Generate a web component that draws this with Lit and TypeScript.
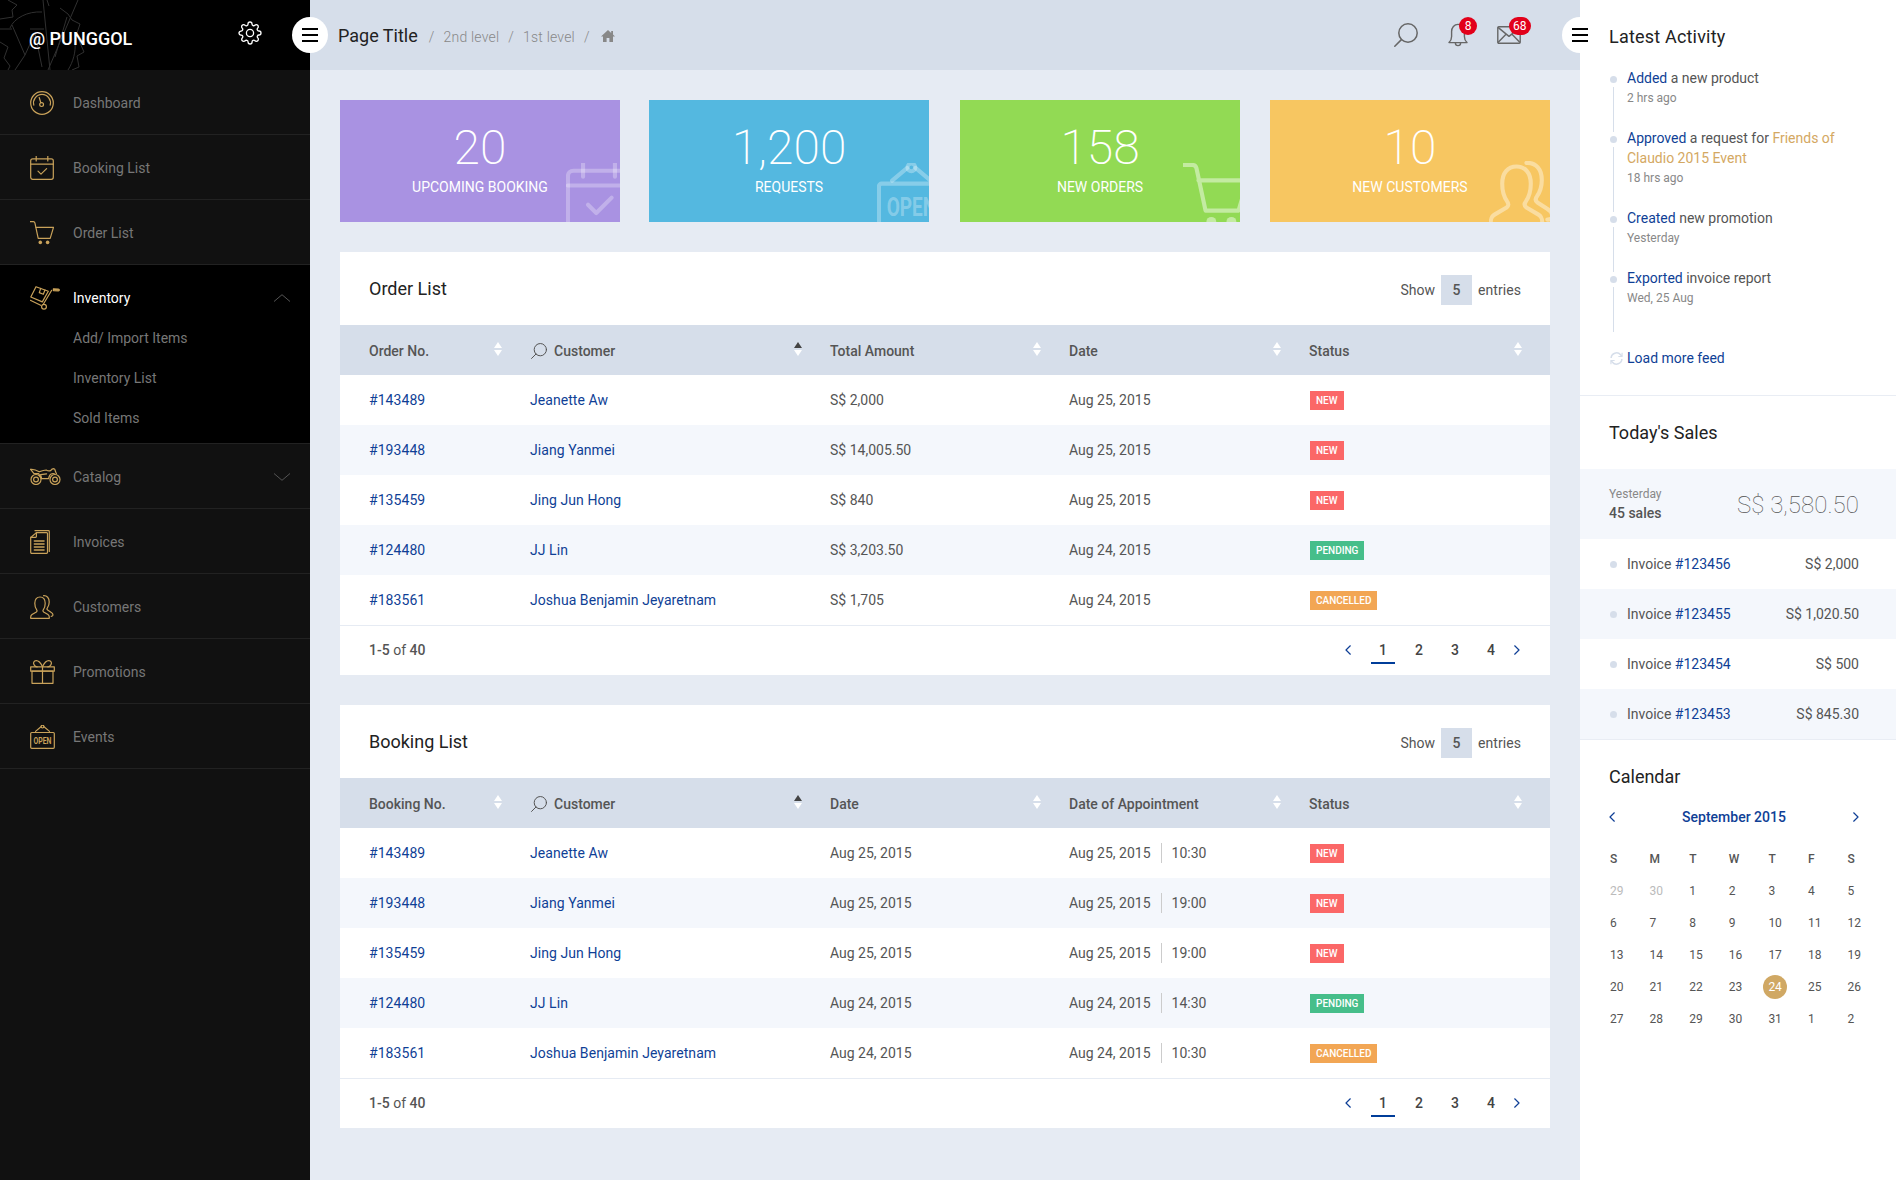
import { LitElement, html, css, svg, TemplateResult } from "lit";
import { customElement } from "lit/decorators.js";

const ICONS: Record<string, { w: number; h: number; body: unknown }> = {
  dashboard: { w: 24, h: 24, body: svg`<circle cx="12" cy="12" r="11.3"/><path d="M3.8 14.2a8.5 8.5 0 1 1 16.4 0"/><path d="M9.2 6.5l1.6 5.2"/><circle cx="11.6" cy="13.6" r="1.9"/>` },
  calendar: { w: 24, h: 24, body: svg`<rect x=".7" y="2.8" width="22.6" height="20.5" rx="2"/><path d="M.7 8.2h22.6M6.2 0v5M17.8 0v5"/><path d="M8 15.2l3 3 5.6-5.6"/>` },
  cart: { w: 24, h: 24, body: svg`<path d="M0 .7h3.4c.8 0 1.3.4 1.5 1.2l3.3 15.4h12l3.3-11H5.6"/><circle cx="10.3" cy="21.4" r="1.8" fill="currentColor" stroke="none"/><circle cx="17.6" cy="21.4" r="1.8" fill="currentColor" stroke="none"/>` },
  trolley: { w: 30, h: 24, body: svg`<path d="M6 .7L.8 11l11.5 4.9 6-10.6z"/><path d="M10.7 2.4L9.3 6.6l4 1.7L15 4.1"/><path d="M.3 14.3l10.4 5"/><path d="M13.3 18.3L21.7 4.3"/><path d="M23.4 2.8l5 .4c1.2.1 1.2 1.6 0 1.6l-5-.2z" fill="currentColor"/><circle cx="14" cy="20.8" r="2.4"/>` },
  moto: { w: 31, h: 17, body: svg`<circle cx="6" cy="11.5" r="5"/><circle cx="6" cy="11.5" r="2.4"/><circle cx="25" cy="11.5" r="5"/><circle cx="25" cy="11.5" r="2.4"/><path d="M.6 1.4c3.2-.4 6 .8 8.6 2.4 2.6-1 5-1.8 7-1.8 1.6 1 2.8 1.4 4.4.6.8-1.2 1.8-2 3.2-2 1 .2 1.4 1.2 1.4 2.2l1.2 3"/><path d="M.6 1.4L4 5.6h4.6l3 5h7c.6-3 1.6-4.6 3-4.8 1-.2 2-.2 2.8 0"/><path d="M11.6 10.6l-1-4 6-.8"/>` },
  invoice: { w: 20, h: 24, body: svg`<path d="M5 .7h13.5c.5 0 .8.3.8.8v20"/><path d="M1.6 6.8L6.4 2.6h10.2c.5 0 .9.4.9.9v18.8c0 .5-.4 1-.9 1H1.6c-.5 0-.9-.5-.9-1V7.6c0-.3.3-.8.9-.8z"/><path d="M1 7.4h4.6c.5 0 .8-.3.8-.8V2.6"/><path d="M4.4 11h9.6M4.4 14h9.6M4.4 17h9.6M4.4 20h9.6" stroke-width="1.6"/>` },
  customers: { w: 25, h: 24, body: svg`<path d="M.7 23.3c-.2-2 0-3 1.3-3.8l4.4-2.6c.8-.6.8-1.4.2-2.2-1-1.4-1.8-3.8-1.8-6.4C4.8 4.4 6.8 2 10 2s5.2 2.4 5.2 6.3c0 2.6-.8 5-1.8 6.4-.6.8-.6 1.6.2 2.2l4.4 2.6c1.3.8 1.5 1.8 1.3 3.8z"/><path d="M13.6.7c3.4-.2 5.6 2.2 5.6 6.2 0 2.6-.8 4.6-1.8 6-.7.9-.5 1.6.2 2.2l3.4 2.2c1.3.8 2 1.6 2 2.8 0 .9-.7 1.2-1.8 1.2"/>` },
  gift: { w: 25, h: 24, body: svg`<rect x=".7" y="6.8" width="23.6" height="4.4"/><rect x="2" y="11.2" width="21" height="12.1"/><path d="M12.5 6.8v16.5"/><path d="M12.5 6.8C10.6 2.6 8.4.7 6.2.7 3.8.7 3 3 4 4.6c.6 1.1 1.8 2.2 3.2 2.2"/><path d="M12.5 6.8C14.4 2.6 16.6.7 18.8.7c2.4 0 3.2 2.3 2.2 3.9-.6 1.1-1.8 2.2-3.2 2.2"/>` },
  open: { w: 25, h: 24, body: svg`<path d="M5.5 6.4L11 1.8M14 1.8l5.5 4.6"/><circle cx="12.5" cy="1.6" r="1.4"/><rect x=".7" y="7.5" width="23.6" height="15.8" rx="1"/><text x="3.5" y="19.2" textLength="18" lengthAdjust="spacingAndGlyphs" class="open-text">OPEN</text>` },
};

function icon(name: string, cls: string, scale = 1): TemplateResult {
  const i = ICONS[name];
  const style = `width:${i.w * scale}px;height:${i.h * scale}px`;
  return html`<svg class=${cls} style=${style} viewBox="0 0 ${i.w} ${i.h}" fill="none" stroke="currentColor" stroke-width="1.2" stroke-linecap="round" stroke-linejoin="round">${i.body}</svg>`;
}

const searchIcon = (cls: string) => html`<svg class=${cls} viewBox="0 0 24 24" fill="none" stroke="currentColor" stroke-width="1.5" stroke-linecap="round"><circle cx="14" cy="10" r="9.2"/><path d="M7.4 16.6L.8 23.2"/></svg>`;

const chevron = (dir: "left" | "right") => html`<svg class="pg-chev" viewBox="0 0 6 10" fill="none" stroke="currentColor" stroke-width="1.2" stroke-linecap="round" stroke-linejoin="round"><path d=${dir === "left" ? "M5.3 .8L1 5l4.3 4.2" : "M.7 .8L5 5 .7 9.2"}/></svg>`;

const gearPath = "M19.4 15a1.65 1.65 0 0 0 .33 1.82l.06.06a2 2 0 0 1 0 2.83 2 2 0 0 1-2.83 0l-.06-.06a1.65 1.65 0 0 0-1.82-.33 1.65 1.65 0 0 0-1 1.51V21a2 2 0 0 1-2 2 2 2 0 0 1-2-2v-.09A1.65 1.65 0 0 0 9 19.4a1.65 1.65 0 0 0-1.82.33l-.06.06a2 2 0 0 1-2.83 0 2 2 0 0 1 0-2.83l.06-.06a1.65 1.65 0 0 0 .33-1.82 1.65 1.65 0 0 0-1.51-1H3a2 2 0 0 1-2-2 2 2 0 0 1 2-2h.09A1.65 1.65 0 0 0 4.6 9a1.65 1.65 0 0 0-.33-1.82l-.06-.06a2 2 0 0 1 0-2.83 2 2 0 0 1 2.83 0l.06.06a1.65 1.65 0 0 0 1.82.33H9a1.65 1.65 0 0 0 1-1.51V3a2 2 0 0 1 2-2 2 2 0 0 1 2 2v.09a1.65 1.65 0 0 0 1 1.51 1.65 1.65 0 0 0 1.82-.33l.06-.06a2 2 0 0 1 2.83 0 2 2 0 0 1 0 2.83l-.06.06a1.65 1.65 0 0 0-.33 1.82V9a1.65 1.65 0 0 0 1.51 1H21a2 2 0 0 1 2 2 2 2 0 0 1-2 2h-.09a1.65 1.65 0 0 0-1.51 1z";

const NAV_TOP = [
  ["dashboard", "Dashboard"],
  ["calendar", "Booking List"],
  ["cart", "Order List"],
];
const NAV_BOTTOM = [
  ["invoice", "Invoices"],
  ["customers", "Customers"],
  ["gift", "Promotions"],
  ["open", "Events"],
];

const STATS = [
  { n: "20", l: "Upcoming Booking", c: "purple", i: "calendar" },
  { n: "1,200", l: "Requests", c: "blue", i: "open" },
  { n: "158", l: "New Orders", c: "green", i: "cart" },
  { n: "10", l: "New Customers", c: "amber", i: "customers" },
];

const PEOPLE = [
  ["#143489", "Jeanette Aw"],
  ["#193448", "Jiang Yanmei"],
  ["#135459", "Jing Jun Hong"],
  ["#124480", "JJ Lin"],
  ["#183561", "Joshua Benjamin Jeyaretnam"],
];
const ORDERS = [
  ["S$ 2,000", "Aug 25, 2015", "new"],
  ["S$ 14,005.50", "Aug 25, 2015", "new"],
  ["S$ 840", "Aug 25, 2015", "new"],
  ["S$ 3,203.50", "Aug 24, 2015", "pending"],
  ["S$ 1,705", "Aug 24, 2015", "cancelled"],
];
const BOOKINGS = [
  ["Aug 25, 2015", "Aug 25, 2015", "10:30", "new"],
  ["Aug 25, 2015", "Aug 25, 2015", "19:00", "new"],
  ["Aug 25, 2015", "Aug 25, 2015", "19:00", "new"],
  ["Aug 24, 2015", "Aug 24, 2015", "14:30", "pending"],
  ["Aug 24, 2015", "Aug 24, 2015", "10:30", "cancelled"],
];
const INVOICES = [
  ["#123456", "S$ 2,000"],
  ["#123455", "S$ 1,020.50"],
  ["#123454", "S$ 500"],
  ["#123453", "S$ 845.30"],
];
const CAL = [
  ["29", "30", "1", "2", "3", "4", "5"],
  ["6", "7", "8", "9", "10", "11", "12"],
  ["13", "14", "15", "16", "17", "18", "19"],
  ["20", "21", "22", "23", "24", "25", "26"],
  ["27", "28", "29", "30", "31", "1", "2"],
];

@customElement("app-root")
export class AppRoot extends LitElement {
  static styles = css`
    :host {
      display: grid;
      grid-template-columns: 310px 1270px 316px;
      position: relative;
      min-height: 1180px;
      font-family: Roboto, "Liberation Sans", sans-serif;
      font-size: 14px;
      color: #555;
      background: #e6ebf3;
      overflow: hidden;
    }
    * { box-sizing: border-box; }
    a { color: #0f3f96; text-decoration: none; }

    .side { background: #111; min-height: 1180px; }
    .brand {
      height: 70px;
      background: #000;
      position: relative;
      display: flex;
      align-items: center;
      padding: 6px 48px 0 29px;
      justify-content: space-between;
      overflow: hidden;
    }
    .brand-art { position: absolute; left: 0; top: 0; width: 110px; height: 70px; stroke: #303030; fill: none; stroke-width: 1; }
    .brand-name { position: relative; color: #fff; font-size: 18px; font-weight: 500; }
    .gear { position: relative; width: 24px; height: 24px; color: #fff; margin-top: -10px; }
    .row {
      height: 65px;
      display: flex;
      align-items: center;
      padding: 1px 20px 0 30px;
      border-bottom: 1px solid #222;
      color: #777;
    }
    .row .slot { width: 43px; display: flex; align-items: center; flex: none; }
    .nav-i { color: #c9a25a; display: block; }
    .open-text { font-family: Roboto, sans-serif; font-size: 9.5px; font-weight: 700; fill: currentColor; stroke: none; }
    .row .caret { margin-left: auto; width: 16px; height: 8px; color: #555; }
    .group { background: #000; border-bottom: 1px solid #222; padding-bottom: 5px; }
    .group .row { height: 53px; padding-top: 13px; border: 0; color: #fff; }
    .sub { height: 40px; display: flex; align-items: center; padding-left: 73px; color: #777; }

    .main { min-width: 0; }
    .top {
      height: 70px;
      background: #d6deea;
      display: flex;
      align-items: center;
      padding: 0 59px 0 29px;
      color: #888;
    }
    .page-title { font-size: 18px; color: #222; margin-right: 11px; margin-left: -1px; }
    .crumb { display: flex; align-items: center; gap: 9px; font-weight: 300; margin-top: 4px; letter-spacing: 0.2px; }
    .home { width: 14px; height: 14px; fill: #888; margin-left: 2px; margin-top: -2px; }
    .top-icons { margin-left: auto; display: flex; align-items: center; color: #666; }
    .ti { position: relative; display: block; }
    .ti svg { display: block; }
    .search { width: 24px; height: 24px; }
    .bell { width: 20px; height: 24px; margin-left: 30px; }
    .mail { width: 24px; height: 18px; margin-left: 29px; }
    .badge {
      position: absolute;
      background: #e2001a;
      color: #fff;
      font-size: 12px;
      height: 18px;
      min-width: 18px;
      line-height: 18px;
      text-align: center;
      border-radius: 9px;
      padding: 0 3px;
    }
    .bell .badge { left: 11px; top: -6px; }
    .mail .badge { left: 12px; top: -9px; padding: 0 4px; }

    .content { padding: 30px 30px 52px; display: flex; flex-direction: column; gap: 30px; }
    .stats { display: grid; grid-template-columns: 309px 311px 310px 280px; }
    .stat {
      width: 280px;
      height: 122px;
      position: relative;
      overflow: hidden;
      color: #fff;
      text-align: center;
      padding-top: 20px;
    }
    .stat .n { font-size: 48px; font-weight: 200; line-height: 56px; }
    .stat .l { font-size: 14px; text-transform: uppercase; line-height: 20px; margin-top: 1px; }
    .stat .bg { position: absolute; top: 63px; left: 226px; color: rgba(255, 255, 255, 0.28); stroke-width: 1.5; }
    .stat.blue .bg { left: 228px; color: rgba(255, 255, 255, 0.3); }
    .stat.green .bg { left: 223px; color: rgba(255, 255, 255, 0.45); }
    .stat.amber .bg { left: 219px; top: 61px; color: rgba(255, 255, 255, 0.4); }
    .purple { background: #a992e2; }
    .blue { background: #54b8e0; }
    .green { background: #92da54; }
    .amber { background: #f7c661; }

    .card { background: #fff; }
    .card-head {
      height: 73px;
      display: flex;
      align-items: center;
      justify-content: space-between;
      padding: 0 29px;
    }
    .card-title { font-size: 18px; color: #222; }
    .show { display: flex; align-items: center; margin-top: 3px; letter-spacing: 0.05px; }
    .show b { width: 31px; height: 30px; background: #d6deea; margin: 0 6px; display: flex; align-items: center; justify-content: center; font-weight: 500; }
    .grid-row {
      display: grid;
      grid-template-columns: 190px 300px 239px 240px 1fr;
      height: 50px;
      align-items: center;
    }
    .grid-row > * { padding-left: 0; min-width: 0; }
    .grid-row > :first-child { padding-left: 29px; }
    .thead { background: #d6deea; font-weight: 500; }
    .th { display: flex; align-items: center; position: relative; height: 100%; padding-top: 1px; }
    .th .srch { width: 16px; height: 16px; margin: 0 7px 0 1px; color: #555; }
    .sort { position: absolute; right: 28px; top: 17px; display: flex; flex-direction: column; gap: 2px; }
    .sort i { display: block; width: 0; height: 0; border-left: 4.5px solid transparent; border-right: 4.5px solid transparent; }
    .sort i:first-child { border-bottom: 6px solid #fff; }
    .sort i:last-child { border-top: 6px solid #fff; }
    .sort.on i:first-child { border-bottom-color: #444; }
    .tbody .grid-row:nth-child(even) { background: #f4f7fc; }
    .tbody a { letter-spacing: 0.06px; }
    .tag { display: inline-block; height: 19px; line-height: 19px; padding: 0 6px; color: #fff; font-size: 10px; font-weight: 500; margin-left: 1px; vertical-align: middle; }
    .tag.new { background: #fb6767; }
    .tag.pending { background: #46be8a; }
    .tag.cancelled { background: #f2a654; }
    .appt { display: flex; align-items: center; }
    .appt span:first-child { border-right: 1px solid #ccc; padding-right: 10px; margin-right: 10px; line-height: 20px; }
    .card-foot {
      height: 50px;
      border-top: 1px solid #e6ebf3;
      display: flex;
      align-items: center;
      justify-content: space-between;
      padding: 0 29px;
    }
    .foot-info { margin-top: -2px; }
    .foot-info b { font-weight: 500; }
    .pager { display: flex; align-items: center; font-weight: 500; color: #444; margin-right: 1px; }
    .pager a { color: #0f3f96; display: flex; }
    .pg-chev { width: 6px; height: 10px; display: block; }
    .pager span { width: 24px; margin-left: 12px; height: 26px; line-height: 24px; text-align: center; display: block; border-bottom: 2px solid transparent; }
    .pager span.on { border-bottom-color: #003d99; }
    .pager a:first-child { margin-right: 8px; margin-top: -2px; }
    .pager a:last-child { margin-left: 11px; margin-top: -2px; }

    .right { background: #fff; }
    .r-title { font-size: 18px; color: #222; line-height: 24px; }
    .activity { padding: 25px 0 0 29px; height: 396px; border-bottom: 1px solid #e9edf4; }
    .activity .r-title { letter-spacing: 0.2px; }
    .feed { margin-top: 19px; }
    .item { position: relative; padding: 0 20px 20px 18px; line-height: 20px; width: 280px; color: #555; }
    .item::before { content: ""; position: absolute; left: 1px; top: 8px; width: 7px; height: 7px; border-radius: 50%; background: #d6deea; }
    .item::after { content: ""; position: absolute; left: 4px; top: 19px; bottom: -4px; width: 1px; background: #d6deea; }
    .item em { font-style: normal; color: #d4a862; }
    .item small { display: block; font-size: 12px; color: #888; }
    .more { display: flex; align-items: center; margin-top: 20px; line-height: 20px; }
    .more svg { width: 13px; height: 13px; margin-right: 4px; margin-left: 1px; color: #d6deea; }
    .sales-head { padding: 25px 0 0 29px; height: 73px; }
    .summary { height: 70px; background: #f4f7fc; display: flex; align-items: center; justify-content: space-between; padding: 0 37px 0 29px; }
    .summary small { display: block; font-size: 12px; color: #888; line-height: 18px; }
    .summary b { display: block; font-weight: 500; line-height: 20px; }
    .summary .big { font-size: 24px; font-weight: 100; color: #555; padding-top: 2px; letter-spacing: 0.05px; }
    .inv { height: 50px; display: flex; align-items: center; justify-content: space-between; padding: 0 37px 0 29px; position: relative; }
    .inv:nth-child(even) { background: #f4f7fc; }
    .inv .dot { width: 7px; height: 7px; border-radius: 50%; background: #d6deea; margin: 1px 10px 0 1px; display: inline-block; }
    .inv .t { display: flex; align-items: center; white-space: pre; }
    .invs { border-bottom: 1px solid #e9edf4; }
    .calendar { padding: 25px 0 0 29px; }
    .cal-head { display: flex; align-items: center; justify-content: space-between; width: 250px; margin-top: 18px; height: 20px; color: #0f3f96; font-weight: 500; }
    .cal-head a { display: flex; }
    .cal-grid { display: grid; grid-template-columns: repeat(7, 39.6px); grid-auto-rows: 32px; margin-top: 16px; font-size: 12px; align-items: center; margin-left: 1px; }
    .cal-grid .wd { font-weight: 500; }
    .cal-grid .mut { color: #bbb; }
    .cal-grid .today { position: relative; color: #fff; z-index: 0; }
    .cal-grid .today::before { content: ""; position: absolute; left: -5px; top: 50%; margin-top: -12px; width: 24px; height: 24px; border-radius: 50%; background: #d0a864; z-index: -1; }

    .round {
      position: absolute;
      top: 17px;
      width: 36px;
      height: 36px;
      border-radius: 50%;
      background: #fff;
      display: flex;
      flex-direction: column;
      justify-content: center;
      align-items: center;
      gap: 4px;
      z-index: 2;
    }
    .round i { display: block; width: 16px; height: 2px; background: #000; }
    .round.l { left: 292px; }
    .round.r { left: 1562px; }
  `;

  private renderHeadCell(label: string, sort: "" | "on" = "", search = false) {
    return html`<div class="th">
      ${search ? searchIcon("srch") : ""}${label}
      <span class="sort ${sort}"><i></i><i></i></span>
    </div>`;
  }

  private tag(s: string) {
    return html`<div><span class="tag ${s}">${s.toUpperCase()}</span></div>`;
  }

  private foot() {
    return html`<div class="card-foot">
      <div class="foot-info"><b>1-5</b> of <b>40</b></div>
      <div class="pager">
        <a href="#">${chevron("left")}</a>
        <span class="on">1</span><span>2</span><span>3</span><span>4</span>
        <a href="#">${chevron("right")}</a>
      </div>
    </div>`;
  }

  private cardHead(title: string) {
    return html`<div class="card-head">
      <div class="card-title">${title}</div>
      <div class="show">Show <b>5</b> entries</div>
    </div>`;
  }

  render() {
    return html`
      <aside class="side">
        <div class="brand">
          <svg class="brand-art" viewBox="0 0 110 70">
            <path d="M8 0L17 5 12 10 13 17 0 19M0 42L8 47 4 58 10 66 8 70M47 0L49 6M60 8L68 14 72 20 80 24 77 33 80 43 84 52 77 56 79 67 72 70"/>
            <path d="M10 28C14 18 28 11 42 12M75 42C76 52 73 62 68 70"/>
            <path d="M0 29H12M12 25L25 55 15 70M25 55L35 33 42 67M43 0L50 70M78 0L48 70M67 17L55 57M30 29H44"/>
          </svg>
          <div class="brand-name">@ PUNGGOL</div>
          <svg class="gear" viewBox="0 0 24 24" fill="none" stroke="currentColor" stroke-width="1.3" stroke-linejoin="round"><circle cx="12" cy="12" r="3.6"/><path d=${gearPath}/></svg>
        </div>
        ${NAV_TOP.map(([i, t]) => html`<div class="row"><span class="slot">${icon(i, "nav-i")}</span>${t}</div>`)}
        <div class="group">
          <div class="row"><span class="slot">${icon("trolley", "nav-i")}</span>Inventory
            <svg class="caret" viewBox="0 0 16 8" fill="none" stroke="currentColor"><path d="M0 7.5L8 .7l8 6.8"/></svg>
          </div>
          <div class="sub">Add/ Import Items</div>
          <div class="sub">Inventory List</div>
          <div class="sub">Sold Items</div>
        </div>
        <div class="row"><span class="slot">${icon("moto", "nav-i")}</span>Catalog
          <svg class="caret" viewBox="0 0 16 8" fill="none" stroke="currentColor"><path d="M0 .5L8 7.3 16 .5"/></svg>
        </div>
        ${NAV_BOTTOM.map(([i, t]) => html`<div class="row"><span class="slot">${icon(i, "nav-i")}</span>${t}</div>`)}
      </aside>

      <main class="main">
        <header class="top">
          <div class="page-title">Page Title</div>
          <div class="crumb">
            <span>/</span><span>2nd level</span><span>/</span><span>1st level</span><span>/</span>
            <svg class="home" viewBox="0 0 14 14"><path d="M7 1L0 7.5h2V13h3.6V9h2.8v4H12V7.5h2l-2-1.9V2h-1.8v1.9z"/></svg>
          </div>
          <div class="top-icons">
            ${searchIcon("search")}
            <span class="ti bell">
              <svg width="20" height="24" viewBox="0 0 20 24" fill="none" stroke="currentColor" stroke-width="1.4" stroke-linejoin="round"><path d="M1 19.6c1.8-1.6 2.6-3 2.6-6V8.6C3.6 4.6 6.2 1.4 10 1.4s6.4 3.2 6.4 7.2v5c0 3 .8 4.4 2.6 6z"/><path d="M7.4 20a2.6 2.6 0 0 0 5.2 0"/></svg>
              <span class="badge">8</span>
            </span>
            <span class="ti mail">
              <svg width="24" height="18" viewBox="0 0 24 18" fill="none" stroke="currentColor" stroke-width="1.4" stroke-linejoin="round"><rect x=".8" y=".8" width="22.4" height="16.4" rx="1"/><path d="M1 1.4l11 9 11-9M1 16.6l8-8.4M23 16.6l-8-8.4"/></svg>
              <span class="badge">68</span>
            </span>
          </div>
        </header>
        <div class="content">
          <section class="stats">
            ${STATS.map((s) => html`<div class="stat ${s.c}">
              <div class="n">${s.n}</div>
              <div class="l">${s.l}</div>
              ${icon(s.i, "bg", 2.75)}
            </div>`)}
          </section>

          <section class="card">
            ${this.cardHead("Order List")}
            <div class="grid-row thead">
              ${this.renderHeadCell("Order No.")}
              ${this.renderHeadCell("Customer", "on", true)}
              ${this.renderHeadCell("Total Amount")}
              ${this.renderHeadCell("Date")}
              ${this.renderHeadCell("Status")}
            </div>
            <div class="tbody">
              ${ORDERS.map((o, i) => html`<div class="grid-row">
                <div><a href="#">${PEOPLE[i][0]}</a></div>
                <div><a href="#">${PEOPLE[i][1]}</a></div>
                <div>${o[0]}</div>
                <div>${o[1]}</div>
                ${this.tag(o[2])}
              </div>`)}
            </div>
            ${this.foot()}
          </section>

          <section class="card">
            ${this.cardHead("Booking List")}
            <div class="grid-row thead">
              ${this.renderHeadCell("Booking No.")}
              ${this.renderHeadCell("Customer", "on", true)}
              ${this.renderHeadCell("Date")}
              ${this.renderHeadCell("Date of Appointment")}
              ${this.renderHeadCell("Status")}
            </div>
            <div class="tbody">
              ${BOOKINGS.map((o, i) => html`<div class="grid-row">
                <div><a href="#">${PEOPLE[i][0]}</a></div>
                <div><a href="#">${PEOPLE[i][1]}</a></div>
                <div>${o[0]}</div>
                <div class="appt"><span>${o[1]}</span><span>${o[2]}</span></div>
                ${this.tag(o[3])}
              </div>`)}
            </div>
            ${this.foot()}
          </section>
        </div>
      </main>

      <aside class="right">
        <section class="activity">
          <div class="r-title">Latest Activity</div>
          <div class="feed">
            <div class="item"><a href="#">Added</a> a new product<small>2 hrs ago</small></div>
            <div class="item"><a href="#">Approved</a> a request for <em>Friends of Claudio 2015 Event</em><small>18 hrs ago</small></div>
            <div class="item"><a href="#">Created</a> new promotion<small>Yesterday</small></div>
            <div class="item"><a href="#">Exported</a> invoice report<small>Wed, 25 Aug</small></div>
          </div>
          <div class="more">
            <svg viewBox="0 0 14 14" fill="none" stroke="currentColor" stroke-width="1.6"><path d="M1.2 6.4A5.8 5.8 0 0 1 11.4 3l1.4 1.6M12.8 7.6A5.8 5.8 0 0 1 2.6 11L1.2 9.4"/><path d="M13 .8v4h-4M1 13.2v-4h4" stroke-width="1.2"/></svg>
            <a href="#">Load more feed</a>
          </div>
        </section>
        <section>
          <div class="sales-head r-title">Today's Sales</div>
          <div class="summary">
            <div><small>Yesterday</small><b>45 sales</b></div>
            <div class="big">S$ 3,580.50</div>
          </div>
          <div class="invs">
            ${INVOICES.map(([n, v]) => html`<div class="inv">
              <span class="t"><span class="dot"></span>Invoice <a href="#">${n}</a></span><span>${v}</span>
            </div>`)}
          </div>
        </section>
        <section class="calendar">
          <div class="r-title">Calendar</div>
          <div class="cal-head">
            <a href="#">${chevron("left")}</a>September 2015<a href="#">${chevron("right")}</a>
          </div>
          <div class="cal-grid">
            ${["S", "M", "T", "W", "T", "F", "S"].map((d) => html`<div class="wd">${d}</div>`)}
            ${CAL.map((w, r) =>
              w.map((d, c) => {
                const mut = r === 0 && c < 2;
                const today = r === 3 && c === 4;
                return html`<div class="${mut ? "mut" : ""} ${today ? "today" : ""}">${d}</div>`;
              })
            )}
          </div>
        </section>
      </aside>

      <div class="round l"><i></i><i></i><i></i></div>
      <div class="round r"><i></i><i></i><i></i></div>
    `;
  }
}
